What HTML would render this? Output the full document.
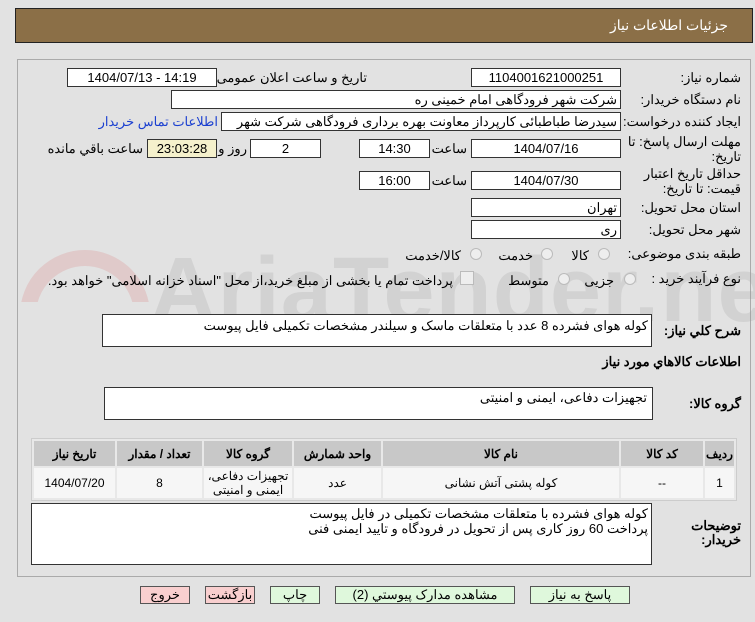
<!DOCTYPE html>
<html><head><meta charset="utf-8"><style>
body{margin:0;width:755px;height:622px;background:#e2e2e2;font-family:"Liberation Sans","Noto Sans CJK SC",sans-serif;font-size:12px;color:#000;position:relative;overflow:hidden}
.a{position:absolute;white-space:nowrap}
.box{position:absolute;background:#fff;border:1px solid #333;box-sizing:border-box;height:19px;line-height:17px;text-align:center;font-size:13px}
.l{position:absolute;direction:rtl;text-align:right;white-space:nowrap;font-size:13px}
.r{position:absolute;width:12px;height:12px;border-radius:50%;border:1px solid #bbb;background:#eee;box-sizing:border-box}
.btn{position:absolute;top:586px;height:18px;border:1px solid #555;box-sizing:border-box;text-align:center;line-height:16px;font-size:13px}
table{position:absolute;left:31px;top:438px;width:706px;border-collapse:separate;border-spacing:2px;background:#e8e8e8;border:1px solid #ccc}
td{font-size:12px;text-align:center}
th{background:#c8c8c8;height:23px;font-size:12px}
td{background:#f6f6f6;height:27px;line-height:14px}
</style></head><body>
<div class="a" style="left:15px;top:8px;width:738px;height:35px;background:#8b6f47;border:1px solid #222;box-sizing:border-box"></div>
<div class="l" style="right:27px;top:17px;color:#fff;font-size:14px">جزئیات اطلاعات نیاز</div>
<div class="a" style="left:17px;top:59px;width:734px;height:518px;border:1px solid #aaa;box-sizing:border-box;background:#e2e2e2"></div>
<div class="a" style="left:20px;top:250px;width:130px;height:130px;border-radius:50%;border:16px solid rgba(220,120,120,.22);box-sizing:border-box;clip-path:inset(0 0 60% 0)"></div>
<div class="a" style="left:150px;top:238px;font-size:92px;font-weight:bold;color:rgba(150,150,150,.2);letter-spacing:1px">AriaTender.net</div>

<div class="l" style="right:14px;top:70px">شماره نیاز:</div>
<div class="box" style="left:471px;top:68px;width:150px">1104001621000251</div>
<div class="l" style="right:388px;top:70px">تاریخ و ساعت اعلان عمومی:</div>
<div class="box" style="left:67px;top:68px;width:150px">1404/07/13 - 14:19</div>

<div class="l" style="right:14px;top:92px">نام دستگاه خریدار:</div>
<div class="box" style="left:171px;top:90px;width:450px;text-align:right;direction:rtl;padding-right:3px">شرکت شهر فرودگاهی امام خمینی  ره</div>

<div class="l" style="right:14px;top:114px">ایجاد کننده درخواست:</div>
<div class="box" style="left:221px;top:112px;width:400px;text-align:right;direction:rtl;padding-right:3px;overflow:hidden">سیدرضا طباطبائی کارپرداز معاونت بهره برداری فرودگاهی شرکت شهر فرودگاهی</div>
<div class="l" style="right:537px;top:114px;color:#1a3fd0">اطلاعات تماس خریدار</div>

<div class="l" style="right:14px;top:134px;line-height:15px">مهلت ارسال پاسخ: تا<br>تاریخ:</div>
<div class="box" style="left:471px;top:139px;width:150px">1404/07/16</div>
<div class="l" style="right:288px;top:141px">ساعت</div>
<div class="box" style="left:359px;top:139px;width:71px">14:30</div>
<div class="box" style="left:250px;top:139px;width:71px">2</div>
<div class="l" style="right:508px;top:141px">روز و</div>
<div class="box" style="left:147px;top:139px;width:70px;background:#f5f1cc">23:03:28</div>
<div class="l" style="right:612px;top:141px">ساعت باقي مانده</div>

<div class="l" style="right:14px;top:166px;line-height:15px">حداقل تاریخ اعتبار<br>قیمت: تا تاریخ:</div>
<div class="box" style="left:471px;top:171px;width:150px">1404/07/30</div>
<div class="l" style="right:288px;top:173px">ساعت</div>
<div class="box" style="left:359px;top:171px;width:71px">16:00</div>

<div class="l" style="right:14px;top:200px">استان محل تحویل:</div>
<div class="box" style="left:471px;top:198px;width:150px;text-align:right;padding-right:3px">تهران</div>
<div class="l" style="right:14px;top:222px">شهر محل تحویل:</div>
<div class="box" style="left:471px;top:220px;width:150px;text-align:right;padding-right:3px">ری</div>

<div class="l" style="right:14px;top:246px">طبقه بندی موضوعی:</div>
<div class="r" style="left:598px;top:248px"></div><div class="l" style="right:166px;top:248px">کالا</div>
<div class="r" style="left:541px;top:248px"></div><div class="l" style="right:222px;top:248px">خدمت</div>
<div class="r" style="left:470px;top:248px"></div><div class="l" style="right:294px;top:248px">کالا/خدمت</div>

<div class="l" style="right:14px;top:271px">نوع فرآیند خرید :</div>
<div class="r" style="left:624px;top:273px"></div><div class="l" style="right:141px;top:273px">جزیی</div>
<div class="r" style="left:558px;top:273px"></div><div class="l" style="right:206px;top:273px">متوسط</div>
<div class="a" style="left:460px;top:271px;width:12px;height:12px;border:1px solid #bbb;background:#eee"></div>
<div class="l" style="right:302px;top:273px">پرداخت تمام یا بخشی از مبلغ خرید،از محل "اسناد خزانه اسلامی" خواهد بود.</div>

<div class="l" style="right:14px;top:323px;font-weight:bold">شرح کلي نیاز:</div>
<div class="box" style="left:102px;top:314px;width:550px;height:33px;text-align:right;direction:rtl;padding-right:3px;line-height:22px">کوله هوای فشرده 8 عدد با متعلقات ماسک و سیلندر   مشخصات تکمیلی فایل پیوست</div>
<div class="l" style="right:14px;top:354px;font-weight:bold">اطلاعات کالاهاي مورد نیاز</div>
<div class="l" style="right:14px;top:396px;font-weight:bold">گروه کالا:</div>
<div class="box" style="left:104px;top:387px;width:549px;height:33px;text-align:right;direction:rtl;padding-right:5px;line-height:20px">تجهیزات دفاعی، ایمنی و امنیتی</div>

<table dir="rtl"><tr><th style="width:27px">ردیف</th><th style="width:80px">کد کالا</th><th style="width:234px">نام کالا</th><th style="width:85px">واحد شمارش</th><th style="width:86px">گروه کالا</th><th style="width:83px">تعداد / مقدار</th><th>تاریخ نیاز</th></tr>
<tr><td>1</td><td>--</td><td>کوله پشتی آتش نشانی</td><td>عدد</td><td>تجهیزات دفاعی،<br>ایمنی و امنیتی</td><td>8</td><td>1404/07/20</td></tr></table>

<div class="l" style="right:14px;top:519px;font-weight:bold;line-height:14px">توضیحات<br>خریدار:</div>
<div class="box" style="left:31px;top:503px;width:621px;height:62px;text-align:right;direction:rtl;padding-right:3px;line-height:15px;padding-top:2px;white-space:normal">کوله هوای فشرده با متعلقات مشخصات تکمیلی در فایل پیوست<br>پرداخت 60 روز کاری پس از تحویل در فرودگاه و تایید ایمنی فنی</div>

<div class="btn" style="left:140px;width:50px;background:#f9cfcf">خروج</div>
<div class="btn" style="left:205px;width:50px;background:#f9cfcf">بازگشت</div>
<div class="btn" style="left:270px;width:50px;background:#dff8dc">چاپ</div>
<div class="btn" style="left:335px;width:180px;background:#dff8dc">مشاهده مدارک پیوستي (2)</div>
<div class="btn" style="left:530px;width:100px;background:#dff8dc">پاسخ به نیاز</div>
</body></html>
